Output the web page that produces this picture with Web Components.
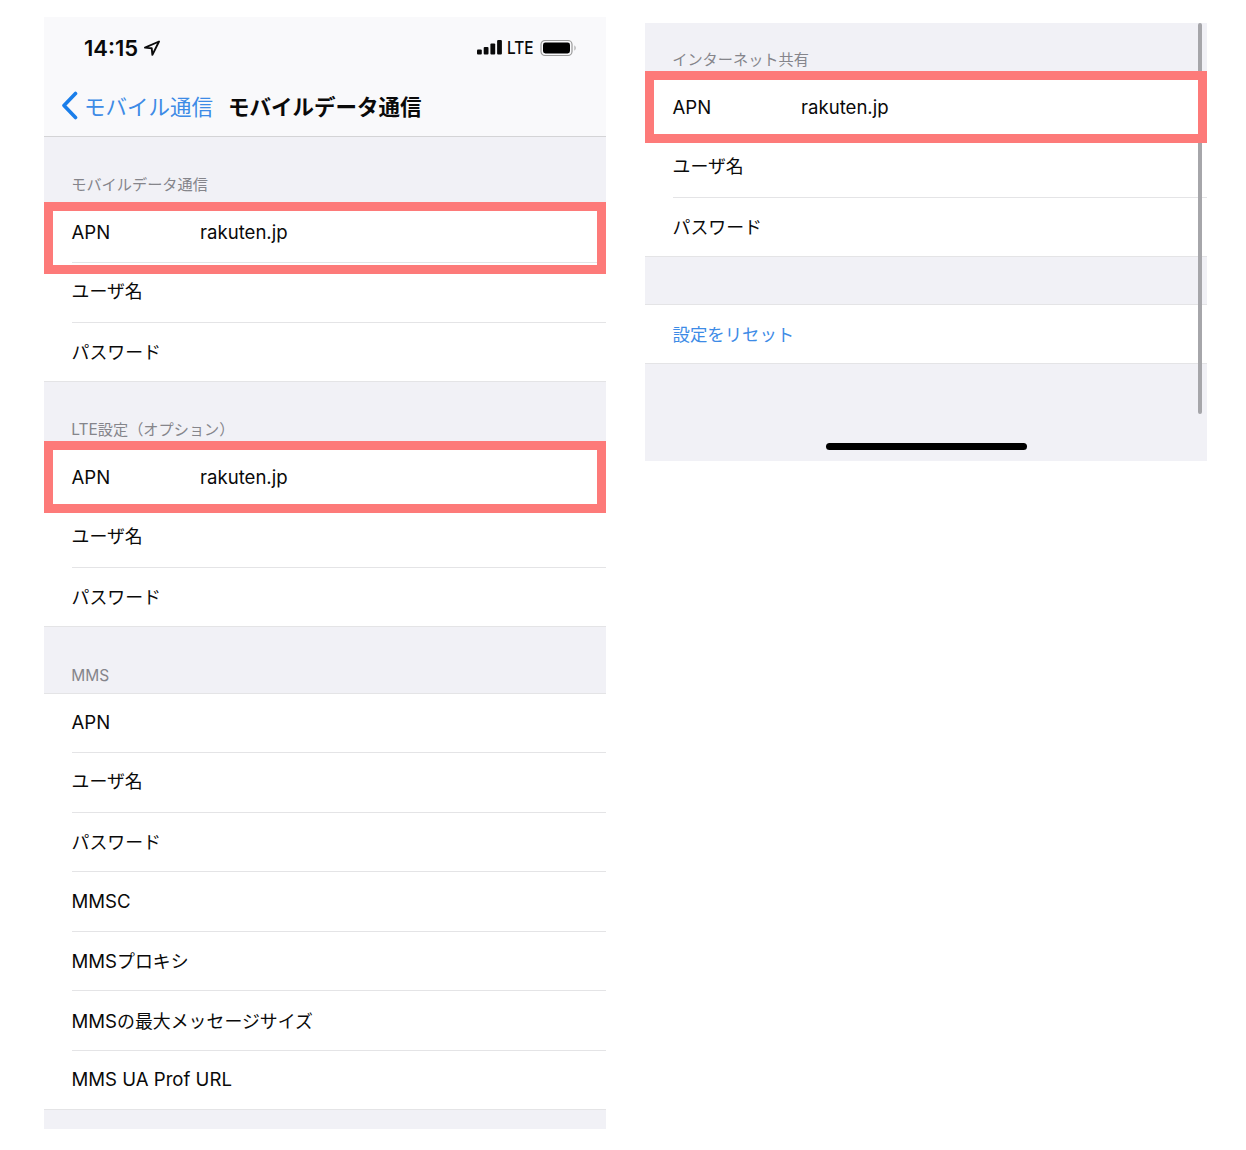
<!DOCTYPE html>
<html lang="ja">
<head>
<meta charset="utf-8">
<title>APN</title>
<style>
    body {
        margin: 0;
        background: #fff;
        font-family: Inter, "Noto Sans CJK JP", sans-serif;
    }
</style>
</head>
<body>
<settings-page>
    <phone-panel slot="left">
        <status-bar></status-bar>
        <nav-bar back="モバイル通信" title="モバイルデータ通信"></nav-bar>
        <apn-section title="モバイルデータ通信" top="66.5">
            <apn-row label="APN" value="rakuten.jp" marked low></apn-row>
            <apn-row label="ユーザ名" up></apn-row>
            <apn-row label="パスワード"></apn-row>
        </apn-section>
        <apn-section title="LTE設定（オプション）" top="66.5">
            <apn-row label="APN" value="rakuten.jp" marked></apn-row>
            <apn-row label="ユーザ名" up></apn-row>
            <apn-row label="パスワード"></apn-row>
        </apn-section>
        <apn-section title="MMS" top="66.5" line>
            <apn-row label="APN"></apn-row>
            <apn-row label="ユーザ名" up></apn-row>
            <apn-row label="パスワード"></apn-row>
            <apn-row label="MMSC"></apn-row>
            <apn-row label="MMSプロキシ"></apn-row>
            <apn-row label="MMSの最大メッセージサイズ"></apn-row>
            <apn-row label="MMS UA Prof URL"></apn-row>
        </apn-section>
        <div style="height:19px"></div>
    </phone-panel>
    <phone-panel slot="right" scroll>
        <apn-section title="インターネット共有" top="55.5">
            <apn-row label="APN" value="rakuten.jp" marked></apn-row>
            <apn-row label="ユーザ名" up></apn-row>
            <apn-row label="パスワード"></apn-row>
        </apn-section>
        <apn-section top="47.5" line>
            <apn-row label="設定をリセット" link></apn-row>
        </apn-section>
        <home-bar></home-bar>
    </phone-panel>
</settings-page>

<script>
// latin runs are a bit larger than the kana next to them in the reference
function sizedText(text) {
    return text.replace(/[A-Za-z][A-Za-z .]*/g, (run) => `<span class="latin">${run}</span>`);
}

class SettingsPage extends HTMLElement {
    constructor() {
        super();
        this.attachShadow({ mode: 'open' });
        this.shadowRoot.innerHTML = `
            <style>
                :host {
                    display: flex;
                    align-items: flex-start;
                    gap: 39px;
                    padding: 17px 0 0 44px;
                }
                .right {
                    margin-top: 6px;
                }
            </style>
            <slot name="left"></slot>
            <div class="right"><slot name="right"></slot></div>
        `;
    }
}

class PhonePanel extends HTMLElement {
    constructor() {
        super();
        this.attachShadow({ mode: 'open' });
        this.shadowRoot.innerHTML = `
            <style>
                :host {
                    display: block;
                    position: relative;
                    width: 562px;
                    background: #f1f1f6;
                }
                .thumb {
                    position: absolute;
                    top: 0;
                    right: 5px;
                    width: 4px;
                    height: 391px;
                    border-radius: 2px;
                    background: #a6a6aa;
                }
            </style>
            <slot></slot>
            ${this.hasAttribute('scroll') ? '<div class="thumb"></div>' : ''}
        `;
    }
}

class StatusBar extends HTMLElement {
    constructor() {
        super();
        this.attachShadow({ mode: 'open' });
        this.shadowRoot.innerHTML = `
            <style>
                :host {
                    display: flex;
                    align-items: center;
                    justify-content: space-between;
                    height: 61px;
                    padding: 0 29px 0 40px;
                    background: #f9f9fb;
                    color: #0a0a0a;
                }
                .time {
                    display: flex;
                    align-items: center;
                    gap: 6px;
                    font-size: 22px;
                    font-weight: 600;
                }
                .right {
                    display: flex;
                    align-items: center;
                    gap: 5px;
                }
                .lte {
                    font-size: 17.5px;
                    font-weight: 500;
                    transform: scaleX(0.88);
                    transform-origin: left center;
                    width: 28px;
                }
                svg { display: block; }
            </style>
            <div class="time">14:15
                <svg width="16" height="16" viewBox="0 0 16 16">
                    <path d="M15 1.5 1 7.6l6.7.6.7 6.7z" fill="none" stroke="#0a0a0a" stroke-width="1.9" stroke-linejoin="round"/>
                </svg>
            </div>
            <div class="right">
                <svg width="25" height="15" viewBox="0 0 25 15" fill="#0a0a0a">
                    <rect x="0" y="9.5" width="4.8" height="5" rx="1"/>
                    <rect x="6.7" y="7" width="4.8" height="7.5" rx="1"/>
                    <rect x="13.4" y="3.5" width="4.8" height="11" rx="1"/>
                    <rect x="20.1" y="0" width="4.8" height="14.5" rx="1"/>
                </svg>
                <span class="lte">LTE</span>
                <svg width="37" height="18" viewBox="0 0 37 18">
                    <rect x="1" y="1.5" width="31" height="15" rx="4" fill="none" stroke="#9a9a9a" stroke-width="1.2"/>
                    <rect x="3" y="3.5" width="27" height="11" rx="2.4" fill="#000"/>
                    <path d="M34.5 6.5c1.4.5 1.4 4.5 0 5z" fill="#9a9a9a"/>
                </svg>
            </div>
        `;
    }
}

class NavBar extends HTMLElement {
    constructor() {
        super();
        this.attachShadow({ mode: 'open' });
        this.shadowRoot.innerHTML = `
            <style>
                :host {
                    display: flex;
                    align-items: center;
                    box-sizing: border-box;
                    height: 59px;
                    padding: 0 0 3px 17px;
                    background: #f9f9fb;
                    border-bottom: 1px solid #d4d4d6;
                }
                .back {
                    display: flex;
                    align-items: center;
                    gap: 6px;
                    color: #3d8be6;
                    font-size: 21.5px;
                }
                .title {
                    margin-left: 15px;
                    color: #0a0a0a;
                    font-size: 21.5px;
                    font-weight: 700;
                }
                svg { display: block; }
            </style>
            <div class="back">
                <svg width="17" height="29" viewBox="0 0 17 29">
                    <path d="M14.5 2.5 3 14.5l11.5 12" fill="none" stroke="#1a7eea" stroke-width="3.6" stroke-linecap="round" stroke-linejoin="round"/>
                </svg>
                <span>${this.getAttribute('back')}</span>
            </div>
            <div class="title">${this.getAttribute('title')}</div>
        `;
    }
}

class ApnSection extends HTMLElement {
    constructor() {
        super();
        this.attachShadow({ mode: 'open' });
        const title = this.getAttribute('title') || '';
        const top = this.getAttribute('top') || '48';
        this.shadowRoot.innerHTML = `
            <style>
                :host {
                    display: block;
                }
                .head {
                    display: flex;
                    align-items: flex-end;
                    box-sizing: border-box;
                    height: ${top}px;
                    padding: 0 28px 7.5px 27.2px;
                    color: #85858b;
                    font-size: 15.2px;
                    line-height: 22px;
                    white-space: pre;
                }
                :host([line]) .head {
                    padding-bottom: 5.5px;
                    border-bottom: 1px solid #e4e4e6;
                }
                .latin {
                    font-size: 15.5px;
                }
            </style>
            <div class="head"><span>${sizedText(title)}</span></div>
            <slot></slot>
        `;
    }
}

class ApnRow extends HTMLElement {
    constructor() {
        super();
        this.attachShadow({ mode: 'open' });
        const value = this.getAttribute('value');
        this.shadowRoot.innerHTML = `
            <style>
                :host {
                    display: block;
                    position: relative;
                    background: #fff;
                    padding-left: 27.5px;
                    color: #0a0a0a;
                    font-size: 17.9px;
                }
                :host([link]) {
                    color: #3d8be6;
                    font-size: 17.4px;
                }
                .inner {
                    display: flex;
                    align-items: center;
                    box-sizing: border-box;
                    height: 59.5px;
                    padding-bottom: 1px;
                    border-bottom: 1px solid #e4e4e6;
                    white-space: pre;
                }
                :host([up]) .inner {
                    padding-bottom: 4px;
                }
                :host(:last-child) .inner {
                    margin-left: -27.5px;
                    padding-left: 27.5px;
                }
                .label {
                    min-width: 128.5px;
                }
                .latin {
                    font-size: 18.6px;
                }
                .mark {
                    position: absolute;
                    top: -7.5px;
                    left: 0;
                    right: 0;
                    bottom: -5px;
                    border: 9px solid #fd7a79;
                    pointer-events: none;
                    z-index: 2;
                }
                :host([low]) .mark {
                    top: -1.5px;
                    bottom: -11px;
                }
            </style>
            <div class="inner">
                <span class="label">${sizedText(this.getAttribute('label'))}</span>
                ${value ? `<span class="latin">${value}</span>` : ''}
            </div>
            ${this.hasAttribute('marked') ? '<div class="mark"></div>' : ''}
        `;
    }
}

class HomeBar extends HTMLElement {
    constructor() {
        super();
        this.attachShadow({ mode: 'open' });
        this.shadowRoot.innerHTML = `
            <style>
                :host {
                    display: flex;
                    justify-content: center;
                    height: 97px;
                    box-sizing: border-box;
                    padding-top: 79px;
                }
                div {
                    width: 201px;
                    height: 7px;
                    border-radius: 4px;
                    background: #000;
                }
            </style>
            <div></div>
        `;
    }
}

customElements.define('settings-page', SettingsPage);
customElements.define('phone-panel', PhonePanel);
customElements.define('status-bar', StatusBar);
customElements.define('nav-bar', NavBar);
customElements.define('apn-section', ApnSection);
customElements.define('apn-row', ApnRow);
customElements.define('home-bar', HomeBar);
</script>
</body>
</html>
